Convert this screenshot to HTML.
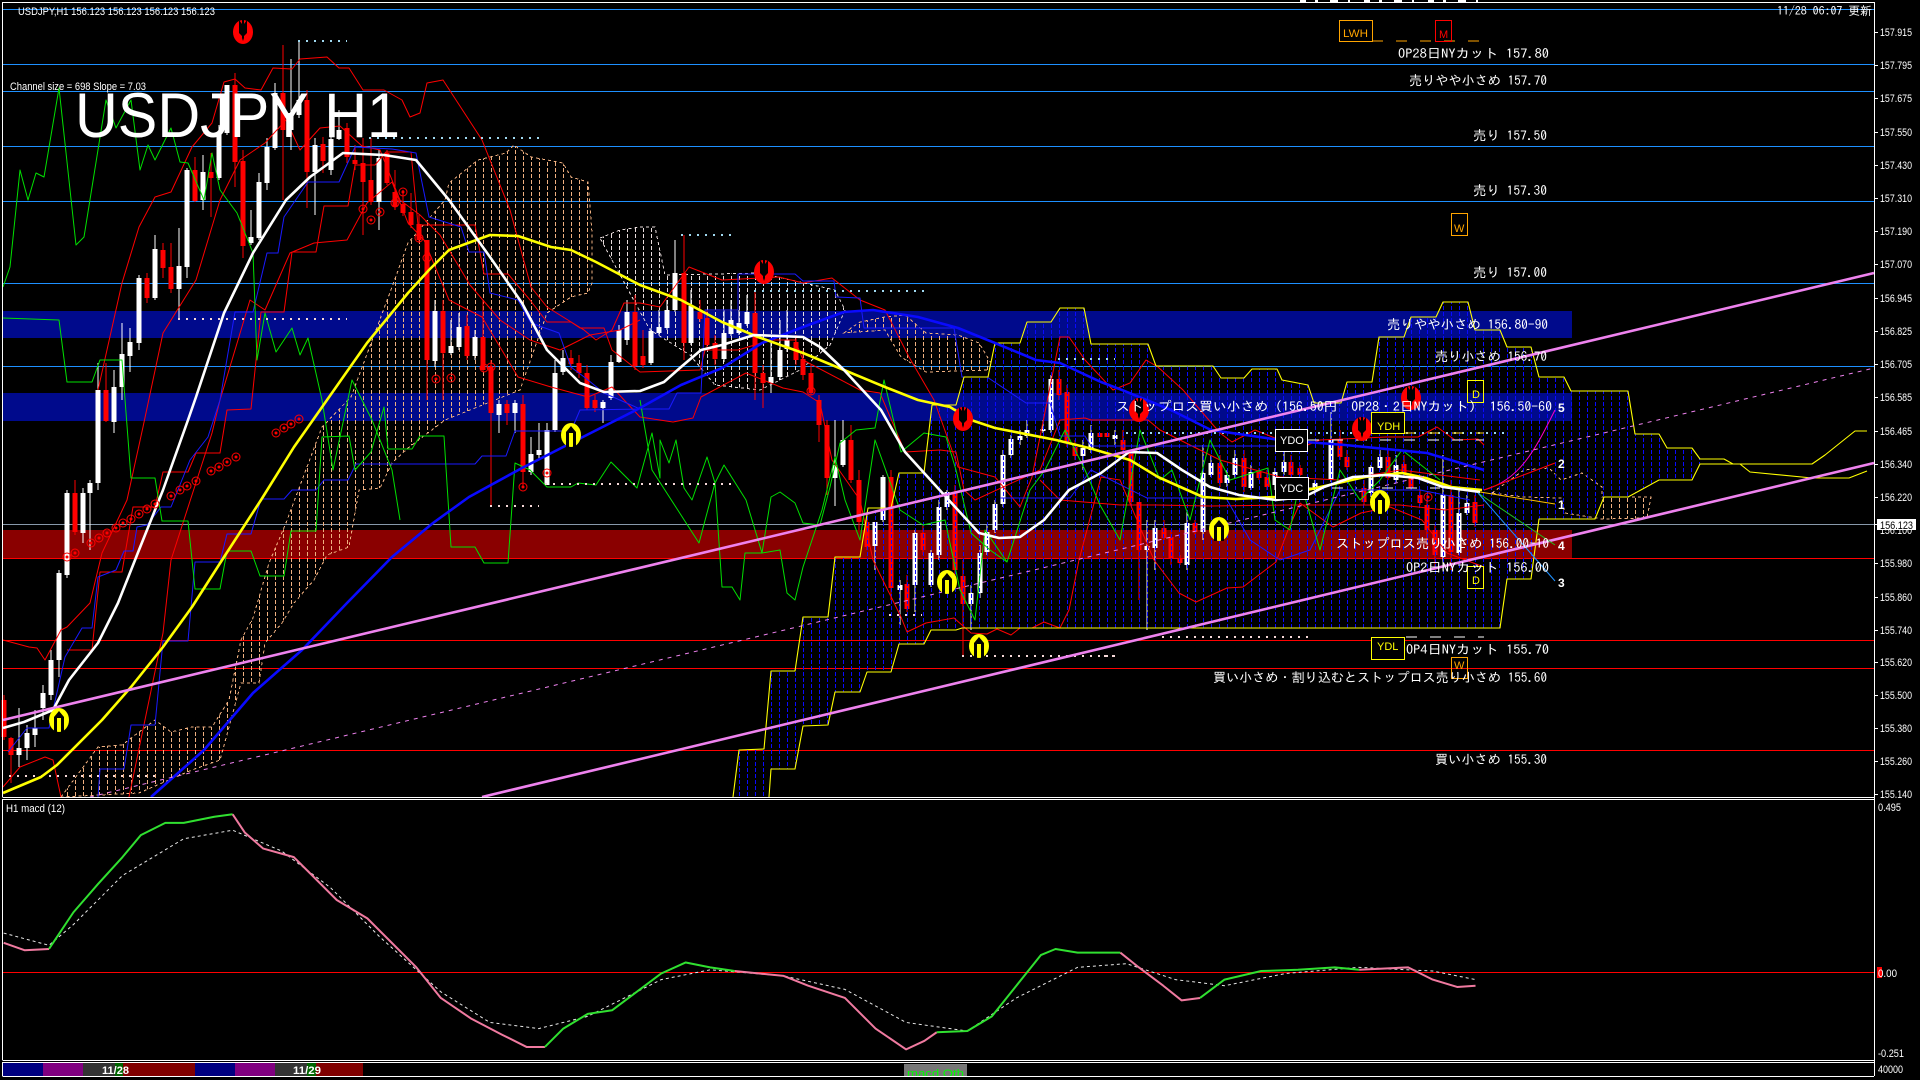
<!DOCTYPE html>
<html lang="ja"><head><meta charset="utf-8"><title>USDJPY H1</title>
<style>
html,body{margin:0;padding:0;background:#000;width:1920px;height:1080px;overflow:hidden}
svg{display:block}
text{fill:#fff;font-family:"Liberation Sans","IPAGothic","Noto Sans CJK JP",sans-serif}
.a{font-size:11px}
.l{font-size:13px;font-family:"IPAGothic","Liberation Sans","Noto Sans CJK JP",sans-serif}
.n{fill:none;stroke-linejoin:round}
.t{fill:none;stroke-width:1}
</style></head><body>
<svg width="1920" height="1080" viewBox="0 0 1920 1080" xmlns="http://www.w3.org/2000/svg" shape-rendering="crispEdges">
<defs>
<pattern id="pb" width="8" height="6" patternUnits="userSpaceOnUse" x="3"><rect x="0" y="0" width="1" height="4" fill="#0a0aff"/></pattern>
<pattern id="po" width="8" height="6" patternUnits="userSpaceOnUse" x="3"><rect x="0" y="0" width="1" height="4" fill="#f0b080"/></pattern>
<pattern id="pw" width="8" height="6" patternUnits="userSpaceOnUse" x="3"><rect x="0" y="0" width="1" height="4" fill="#e8dcdc"/></pattern>
<g id="c"><circle r="4" fill="none" stroke="#f00" stroke-width="1"/><circle r="1.5" fill="#f00"/></g>
<g id="ru"><ellipse rx="10" ry="12" fill="#f00"/><path d="M-1 -12H1V6L0 9L-1 6Z" fill="#000"/><path d="M-4 -12L-1 -8V4L-4 1Z M4 -12L1 -8V4L4 1Z" fill="#000"/></g>
<g id="yu"><ellipse rx="10" ry="12" fill="#ff0"/><path d="M0 -9L5 -3V12H2V-2H-2V12H-5V-3Z" fill="#000"/></g>
</defs>
<rect width="1920" height="1080" fill="#000"/>

<!-- bands -->
<rect x="3" y="311" width="1569" height="27" fill="#000a8c"/>
<rect x="3" y="393" width="1569" height="28" fill="#000a8c"/>
<rect x="3" y="530" width="1569" height="28" fill="#8a0000"/>

<!-- horizontal levels -->
<g stroke="#1e90ff" stroke-width="1">
<path d="M3 9.5H1874M3 64.5H1874M3 91.5H1874M3 146.5H1874M3 201.5H1874M3 283.5H1874M3 366.5H1874"/>
</g>
<path d="M3 524.5H1874" stroke="#8899aa"/>
<path d="M3 558.5H1874M3 640.5H1874M3 668.5H1874M3 750.5H1874" stroke="#f00"/>

<!-- kumo fills under candles (orange+pale) -->
<polygon fill="url(#po)" stroke="#f0b080" stroke-width="1" stroke-dasharray="3 3" points="61,797 98,747 122,745 155,720 171,732 192,727 212,727 229,700 241,640 253,618 269,563 286,523 322,427 351,397 392,287 408,243 445,200 449,183 478,160 506,153 514,145 531,157 563,163 571,177 588,182 592,233 592,283 588,293 571,297 547,313 520,390 470,410 445,420 408,448 392,463 380,488 359,490 349,547 327,555 314,580 294,603 282,623 265,643 259,683 241,683 220,760 192,770 139,793"/>
<polygon fill="url(#po)" stroke="#f0b080" stroke-width="1" stroke-dasharray="3 3" points="844,333 860,322 885,317 905,315 926,333 958,335 979,343 991,363 989,370 926,372 901,357 885,330"/>
<polygon fill="url(#pw)" stroke="#e8dcdc" stroke-width="1" stroke-dasharray="3 3" points="600,238 620,230 640,227 655,227 665,275 760,273 835,290 845,310 830,345 800,370 760,390 715,385 690,355 650,330"/>
<polygon fill="url(#po)" stroke="#f0b080" stroke-width="1" stroke-dasharray="3 3" points="1492,493 1524,470 1549,468 1561,480 1582,473 1602,487 1602,497 1651,497 1647,518 1602,519 1565,513 1561,498 1524,497"/>
<polygon fill="url(#po)" points="1060,505 1085,520 1160,520 1180,460 1300,465 1330,470 1460,470 1440,490 1380,505 1300,520 1200,520 1100,525"/>

<!-- candles -->
<path stroke="#fff" stroke-width="1" fill="none" d="M19 708V767M27 725V760M35 710V747M43 685V720M51 650V700M59 570V677M67 490V578M83 488V543M90 480V550M98 363V490M114 370V433M122 323V400M130 328V372M139 275V350M155 235V300M179 228V320M187 168V278M203 155V210M219 125V180M227 85V135M251 210V245M259 173V240M267 138V190M275 83V150M291 59V150M299 40V118M315 138V215M331 110V175M339 110V140M379 150V230M435 300V367M451 320V355M459 313V350M475 330V360M499 400V433M515 400V433M531 437V475M539 423V460M547 423V485M555 360V432M563 350V375M603 400V423M611 355V400M619 325V363M627 300V345M651 328V365M659 310V335M667 300V330M675 240V312M691 290V345M724 310V362M731 300V336M739 310V335M747 295V326M771 340V393M780 320V380M787 310V352M835 420V506M843 420V467M875 522V570M883 475V522M900 580V625M915 530V612M931 550V587M939 500V560M947 490V510M971 585V630M980 545V598M987 525V555M995 500V533M1003 450V507M1011 435V458M1020 430V445M1027 420V438M1043 420V433M1051 375V433M1083 440V470M1091 425V453M1115 430V445M1147 520V630M1155 520V570M1187 510V570M1203 445V540M1211 455V477M1227 470V487M1235 450V478M1251 465V490M1275 468V490M1284 450V475M1315 480V495M1331 412V482M1371 465V497M1380 450V470M1396 455V482M1443 455V570M1459 490V555M1467 495V515"/>
<path stroke="#fff" stroke-width="5" fill="none" d="M19 748V755M27 733V748M35 728V735M43 693V708M51 660V695M59 573V660M67 493V575M83 493V533M90 483V493M98 390V483M114 387V422M122 354V387M130 342V356M139 278V343M155 249V298M179 266V289M187 170V267M203 172V200M219 133V178M227 85V133M251 237V243M259 182V238M267 147V183M275 93V148M291 113V130M299 100V115M315 145V172M331 139V170M339 130V139M379 158V202M435 311V361M451 346V353M459 327V347M475 337V356M499 404V415M515 403V413M531 454V472M539 450V455M547 430V485M555 373V430M563 358V372M603 402V408M611 362V398M619 330V362M627 312V340M651 331V363M659 327V333M667 310V328M675 273V310M691 306V343M724 333V359M731 320V334M739 323V333M747 312V324M771 377V383M780 350V377M787 340V349M835 465V478M843 440V465M875 522V546M883 477V520M900 585V590M915 533V585M931 553V585M939 507V555M947 492V507M971 593V604M980 553V593M987 532V552M995 504V530M1003 455V504M1011 439V455M1020 436V440M1027 430V436M1043 429V431M1051 379V430M1083 448V456M1091 433V450M1115 435V439M1147 546V550M1155 528V548M1187 523V565M1203 473V532M1211 463V475M1227 475V483M1235 458V475M1251 472V488M1275 472V485M1284 462V472M1315 483V490M1331 440V480M1371 467V493M1380 457V468M1396 465V480M1443 495V557M1459 513V553M1467 503V513"/>
<path stroke="#f00" stroke-width="1" fill="none" d="M4 695V740M11 737V783M75 480V535M106 363V422M147 273V303M163 243V278M171 243V293M195 157V202M211 153V217M235 73V187M243 150V258M283 45V200M307 90V208M323 137V173M347 123V163M355 145V170M363 138V235M371 138V205M387 150V185M395 170V210M403 190V216M411 193V228M419 215V243M427 240V400M443 300V400M467 315V360M483 300V372M491 360V506M507 400V425M523 395V487M571 350V370M579 355V378M587 365V410M595 395V412M635 295V370M643 330V368M684 235V360M700 300V322M707 310V350M715 335V365M755 292V400M763 365V408M796 335V365M803 350V380M811 365V395M819 395V442M827 420V495M851 425V483M859 470V530M867 515V550M891 470V600M907 575V612M923 525V555M955 485V575M963 560V655M1059 370V400M1067 385V447M1075 440V460M1123 430V455M1131 450V505M1139 502V600M1164 520V540M1171 530V565M1180 555V565M1195 520V535M1220 455V487M1244 450V492M1259 468V480M1267 470V490M1291 455V478M1300 465V476M1340 430V460M1347 450V470M1364 480V505M1388 450V480M1404 455V476M1411 470V490M1420 490V505M1427 495V550M1435 525V570M1451 480V570M1475 495V527"/>
<path stroke="#f00" stroke-width="5" fill="none" d="M4 700V737M11 738V755M75 493V532M106 390V421M147 278V298M163 250V268M171 267V289M195 170V201M211 172V178M235 85V162M243 161V246M283 93V130M307 100V172M323 144V161M347 128V157M355 160V164M363 163V182M371 180V202M387 153V183M395 192V207M403 204V213M411 212V225M419 224V240M427 240V360M443 311V353M467 326V356M483 337V370M491 367V413M507 404V413M523 404V472M571 358V364M579 363V373M587 373V408M595 400V408M635 312V366M643 356V365M684 273V343M700 312V319M707 318V345M715 343V359M755 313V373M763 373V383M796 342V360M803 359V375M811 373V393M819 400V425M827 425V478M851 440V480M859 480V522M867 522V547M891 477V588M907 584V609M923 533V550M955 493V570M963 576V604M1059 379V395M1067 392V443M1075 447V456M1100 433V437M1107 433V437M1123 440V450M1131 450V502M1139 502V550M1164 528V538M1171 537V558M1180 558V563M1195 523V532M1220 463V483M1244 458V487M1259 472V478M1267 477V487M1291 462V475M1300 468V475M1340 439V457M1347 457V467M1364 488V502M1388 457V478M1404 464V473M1411 477V488M1420 495V503M1427 505V530M1435 530V555M1451 495V552M1475 502V523"/>

<!-- blue kumo dashes (over candles) -->
<polygon fill="url(#pb)" points="733,797 739,750 764,749 771,671 795,671 803,617 828,617 835,557 860,557 868,508 891,508 899,473 924,473 932,405 956,405 964,377 988,377 995,343 1020,343 1027,322 1051,322 1060,308 1084,308 1091,344 1148,344 1156,366 1213,366 1221,378 1244,378 1252,369 1277,369 1282,380 1308,385 1314,403 1341,403 1347,382 1372,382 1379,337 1404,337 1411,317 1436,317 1443,302 1468,302 1475,330 1500,330 1507,347 1531,347 1539,377 1564,377 1571,391 1628,391 1635,434 1659,434 1667,448 1692,448 1700,459 1700,464 1692,480 1659,480 1628,497 1604,497 1595,519 1539,519 1531,579 1507,579 1500,628 962,628 956,630 931,630 924,644 899,644 891,672 867,672 860,692 835,692 828,725 803,726 795,769 771,769 769,797"/>

<!-- red thin curves -->
<g class="n" stroke="#f00" stroke-width="1" shape-rendering="auto">
<polyline class="n" points="98,390 122,283 139,227 155,197 171,192 192,147 212,123 224,82 235,79 245,88 261,90 273,68 292,69 300,59 327,57 339,68 349,68 363,90 384,90 402,100 410,117 420,113 427,83 443,80 482,140 510,210 531,287 547,307 584,330 596,340 612,330 624,303 640,303 660,307 689,267 722,280 779,277 803,283 832,278 860,300 885,310 909,357 934,400 958,467 995,477 1020,507 1032,477 1060,337 1069,337 1085,360 1113,390 1130,383 1146,360 1158,367 1183,390 1220,433 1232,442 1255,430 1300,448 1320,440 1386,437 1418,437 1437,427 1455,440 1478,439 1484,445"/>
<polyline class="n" points="3,787 20,767 45,757 53,760 61,797"/>
<polyline class="n" points="3,640 29,647 37,648 45,660 61,630 67,627 90,603 102,553 127,500 143,427 163,333 196,280 220,200 240,160 265,143 286,120 300,150 320,128 340,126 362,146 380,150 400,200 420,215 440,235 470,285 500,320 530,340 560,350 590,335 620,330 640,320"/>
<polyline class="n" points="129,797 163,633 171,560 212,433 220,400 250,300 265,310 290,253 314,243 347,240 367,203 392,182 408,223 424,240 449,300 482,317 518,377 551,387 588,397 612,387 640,417 673,422 693,418 701,397 746,373 783,388 803,392 820,403 832,460 860,500 873,560 901,617 907,632 926,623 954,618 971,633 987,634 997,629 1011,635 1020,628 1032,628 1044,622 1060,628 1069,610 1079,560 1101,477 1120,480 1154,560 1179,593 1196,602 1227,588 1243,587 1276,562 1288,530 1300,503 1333,527 1361,513 1390,507 1422,520 1447,553 1484,567"/>
<polyline class="n" points="67,650 92,650 100,572 122,572 133,507 155,507 163,472 188,472 196,453 220,453 227,410 251,409 261,312 284,312 292,252 316,252 324,206 348,206 355,165 375,165 386,152 411,152 418,225 475,225 484,274 508,274 530,300 547,322 571,322 580,328 604,328 612,350 640,372 700,370 705,350 738,350 771,340 795,340 803,360 860,390 880,393 905,452 940,450 956,452 964,490 975,500 1040,470 1060,420 1085,418 1091,420 1148,420 1160,430 1220,460 1280,477 1340,480 1400,470 1480,480"/>
<polyline class="n" points="1040,480 1060,500 1120,505 1156,505 1210,506 1290,505 1400,505 1445,510 1484,505"/>
</g>

<!-- blue thin lines -->
<g shape-rendering="auto">
<polyline class="n" stroke="#1a1aff" stroke-width="1" points="8,752 27,728 49,728 65,657 82,628 92,628 98,577 116,570 124,551 133,551 137,527 147,525 161,507 171,507 190,460 208,437 220,400 235,312 253,312 267,253 278,253 284,217 308,182 339,182 355,147 392,149 416,153 429,217 461,227 469,252 484,252 490,293 518,300 531,323 559,333 571,367 588,380 604,393 640,409 669,409 677,393 701,393 705,310 738,310 738,274 795,274 803,281 834,281 836,297 860,298 864,328 954,328 962,377 987,377 1026,403 1050,403 1060,436 1085,436 1091,446 1280,446 1300,450"/>
<polyline class="n" stroke="#1a1aff" stroke-width="1" points="98,797 100,769 124,769 131,725 155,725 163,641 188,641 195,562 220,562 227,534 251,534 261,499 284,499 292,490 316,490 324,480 348,480 356,464 475,464 482,456 506,456 515,431 571,431 580,410 640,409"/>
<polyline class="n" stroke="#1a1aff" stroke-width="1" points="1000,498 1070,498 1091,470 1147,498 1226,498 1250,540 1280,560 1310,550 1340,490 1420,490 1470,500"/>
</g>

<!-- green -->
<g shape-rendering="auto">
<polyline class="n" stroke="#00e000" stroke-width="1" points="3,287 10,267 20,170 28,200 36,173 44,177 59,88 76,245 84,237 106,100 116,128 131,100 140,170 148,145 155,160 171,128 180,162 188,163 204,200 212,153 220,190 237,213 253,253 257,360 265,313 276,352 292,328 300,355 308,338 322,400 333,470 352,380 372,420 392,470 400,520"/>
<polyline class="n" stroke="#00e000" stroke-width="1" points="3,318 31,319 59,320 67,382 92,382 100,360 122,360 131,478 155,478 162,521 188,521 195,589 220,589 227,551 251,551 260,576 284,576 291,531 316,531 322,437 349,436 355,470 371,452 384,407 388,449 412,449 420,436 444,436 451,547 475,547 484,563 508,563 515,463 530,470 547,487 571,487 578,483 596,485 611,462 637,488 652,433 660,478 660,440 669,463 676,440 684,488 692,500 707,457 715,483 724,465 746,500 762,553 771,497 780,492 795,503 803,523 820,525 830,487 840,443 856,430 875,428 884,380 901,452 924,433 946,437 956,470 971,533 990,550 1007,562"/>
<polyline class="n" stroke="#00e000" stroke-width="1" points="640,400 652,470 699,543 715,483 722,587 732,587 740,600 745,553 762,553 780,550 787,593 795,600 803,567 822,510 835,457 845,500 860,540 875,440 900,510 923,525 945,520 960,590 975,620 985,530 1007,562 1030,490 1045,470 1065,430 1085,470 1100,505 1120,540 1140,430 1160,480 1172,470 1190,520 1210,440 1230,480 1268,468 1275,520 1290,530 1300,480 1320,550 1340,470 1360,500 1380,480 1402,450 1440,480"/>
</g>

<!-- dotted -->
<g fill="none" stroke-width="2" stroke-dasharray="2 6">
<path stroke="#9fd8f0" d="M298 41H347M369 138H539M681 235H731M754 291H925M1058 359H1115M1126 433H1504"/>
<path stroke="#f6d8d8" d="M178 319H347M545 484H732M490 506H539M9 776H155M889 615H922M962 656H1115M1162 637H1308M1104 656H1116"/>
</g>
<g fill="none" stroke-width="1" stroke-dasharray="11 13">
<path stroke="#fff" d="M1308 440H1484M1308 488H1357M1382 488H1440M1406 637H1484"/>
<path stroke="#ffd000" d="M1404 433H1484"/>
<path stroke="#ffa500" d="M1372 41H1484"/>
</g>

<!-- moving averages -->
<g shape-rendering="auto">
<polyline class="n" stroke="#ffff00" stroke-width="1.1" points="733,797 739,750 764,749 771,671 795,671 803,617 828,617 835,557 860,557 868,508 891,508 899,473 924,473 932,405 956,405 964,377 988,377 995,343 1020,343 1027,322 1051,322 1060,308 1084,308 1091,344 1148,344 1156,366 1213,366 1221,378 1244,378 1252,369 1277,369 1282,380 1308,385 1314,403 1341,403 1347,382 1372,382 1379,337 1404,337 1411,317 1436,317 1443,302 1468,302 1475,330 1500,330 1507,347 1531,347 1539,377 1564,377 1571,391 1628,391 1635,434 1659,434 1667,448 1692,448 1700,459 1724,459 1733,464 1812,464 1825,455 1855,431 1867,431"/>
<polyline class="n" stroke="#ffff00" stroke-width="1.1" points="769,797 771,769 795,769 803,726 828,725 835,692 860,692 867,672 891,672 899,644 924,644 931,630 956,630 962,628 1500,628 1507,579 1531,579 1539,519 1595,519 1604,497 1628,497 1659,480 1692,480 1700,464 1740,464 1750,472 1812,478 1849,478 1867,471"/>
<polyline class="n" stroke="#0a0aff" stroke-width="2.6" points="151,797 204,750 253,693 302,650 347,603 392,557 433,523 469,497 522,468 571,443 640,408 681,385 722,368 762,343 803,327 844,312 873,310 918,317 958,328 995,343 1036,360 1060,363 1101,382 1122,390 1171,410 1211,430 1280,440 1345,445 1427,453 1484,470"/>
<polyline class="n" stroke="#ffff00" stroke-width="2.6" points="3,793 41,777 57,765 102,720 131,687 163,647 192,607 224,557 261,500 294,447 327,400 367,343 408,293 429,270 449,250 490,235 518,236 551,247 571,250 596,262 640,285 681,300 722,322 758,337 803,353 844,370 885,387 918,400 950,407 971,420 995,428 1056,440 1089,448 1130,460 1158,477 1203,497 1236,499 1275,497 1316,488 1365,477 1402,473 1426,478 1451,487 1482,490"/>
<polyline class="n" stroke="#fff" stroke-width="2.6" points="3,728 24,722 53,710 69,680 98,643 118,603 139,550 163,490 188,420 196,397 224,313 253,253 286,200 310,177 343,153 384,155 416,160 449,200 490,257 522,303 547,350 580,383 604,392 640,391 664,382 681,367 701,350 722,345 754,335 803,337 820,347 844,370 881,410 905,452 946,497 979,533 999,538 1020,537 1044,520 1069,490 1101,473 1129,452 1157,453 1182,470 1210,487 1239,495 1276,500 1304,497 1324,487 1353,477 1386,475 1418,478 1443,487 1480,492"/>
<!-- channel -->
<polyline class="n" stroke="#ee82ee" stroke-width="2.6" points="3,720 1874,273"/>
<polyline class="n" stroke="#ee82ee" stroke-width="2.6" points="482,797 1874,463"/>
<polyline class="n" stroke="#ee82ee" stroke-width="1" stroke-dasharray="4 5" points="90,797 1874,368"/>
<!-- projection -->
<path class="n" stroke="#ff00c8" stroke-width="1" d="M1484 490C1520 480 1535 450 1555 410"/>
<path class="n" stroke="#f00" stroke-width="1" d="M1484 490L1555 463"/>
<path class="n" stroke="#ffc000" stroke-width="1" d="M1480 492L1555 504"/>
<path class="n" stroke="#20c020" stroke-width="1" d="M1478 493L1555 545"/>
<path class="n" stroke="#1e90ff" stroke-width="1" d="M1478 493L1555 581"/>
</g>

<!-- circle markers -->
<g shape-rendering="auto">
<use href="#c" x="67" y="557"/><use href="#c" x="75" y="553"/><use href="#c" x="91" y="543"/><use href="#c" x="99" y="538"/><use href="#c" x="107" y="533"/><use href="#c" x="116" y="528"/><use href="#c" x="123" y="523"/><use href="#c" x="131" y="519"/><use href="#c" x="139" y="514"/><use href="#c" x="147" y="509"/><use href="#c" x="155" y="504"/><use href="#c" x="171" y="496"/><use href="#c" x="180" y="490"/><use href="#c" x="187" y="486"/><use href="#c" x="196" y="481"/><use href="#c" x="211" y="471"/><use href="#c" x="219" y="467"/><use href="#c" x="227" y="462"/><use href="#c" x="236" y="457"/><use href="#c" x="276" y="433"/><use href="#c" x="284" y="428"/><use href="#c" x="291" y="424"/><use href="#c" x="299" y="419"/><use href="#c" x="523" y="487"/><use href="#c" x="547" y="473"/><use href="#c" x="363" y="209"/><use href="#c" x="371" y="220"/><use href="#c" x="380" y="212"/><use href="#c" x="395" y="203"/><use href="#c" x="403" y="192"/><use href="#c" x="419" y="238"/><use href="#c" x="427" y="258"/><use href="#c" x="436" y="379"/><use href="#c" x="451" y="378"/><use href="#c" x="484" y="368"/><use href="#c" x="491" y="367"/><use href="#c" x="811" y="391"/><use href="#c" x="1428" y="497"/>
<use href="#ru" x="243" y="32"/><use href="#ru" x="764" y="272"/><use href="#ru" x="963" y="419"/><use href="#ru" x="1139" y="410"/><use href="#ru" x="1362" y="429"/><use href="#ru" x="1411" y="398"/>
<use href="#yu" x="59" y="720"/><use href="#yu" x="571" y="435"/><use href="#yu" x="947" y="582"/><use href="#yu" x="979" y="646"/><use href="#yu" x="1219" y="529"/><use href="#yu" x="1380" y="502"/>
</g>

<!-- boxes -->
<g fill="none" stroke-width="1">
<rect x="1339.5" y="20.5" width="33" height="21" stroke="#ffa500"/>
<rect x="1435.5" y="20.5" width="16" height="21" stroke="#f00"/>
<rect x="1451.5" y="213.5" width="16" height="22" stroke="#ffa500"/>
<rect x="1467.5" y="380.5" width="16" height="22" stroke="#ff0"/>
<rect x="1467.5" y="566.5" width="16" height="22" stroke="#ff0"/>
<rect x="1371.5" y="412.5" width="33" height="21" fill="#000" stroke="#ff0"/>
<rect x="1371.5" y="637.5" width="33" height="22" fill="#000" stroke="#ff0"/>
<rect x="1451.5" y="657.5" width="16" height="21" stroke="#ffa500"/>
<rect x="1275.5" y="429.5" width="32" height="22" fill="#000" stroke="#fff"/>
<rect x="1275.5" y="477.5" width="33" height="22" fill="#000" stroke="#fff"/>
</g>
<text class="a" x="1343" y="37" textLength="25" lengthAdjust="spacingAndGlyphs" style="fill:#ffa500">LWH</text>
<text class="a" x="1439" y="38" style="fill:#f00">M</text>
<text class="a" x="1454" y="232" style="fill:#ffa500">W</text>
<text class="a" x="1472" y="398" style="fill:#ff0">D</text>
<text class="a" x="1472" y="584" style="fill:#ff0">D</text>
<text class="a" x="1377" y="430" style="fill:#ff0">YDH</text>
<text class="a" x="1377" y="650" style="fill:#ff0">YDL</text>
<text class="a" x="1454" y="669" style="fill:#ffa500">W</text>
<text class="a" x="1280" y="444">YDO</text>
<text class="a" x="1280" y="492">YDC</text>

<!-- level labels -->
<g class="l">
<text class="l" x="1398" y="58" textLength="151" lengthAdjust="spacingAndGlyphs">OP28日NYカット 157.80</text>
<text class="l" x="1409" y="85" textLength="138" lengthAdjust="spacingAndGlyphs">売りやや小さめ 157.70</text>
<text class="l" x="1473" y="140" textLength="74" lengthAdjust="spacingAndGlyphs">売り 157.50</text>
<text class="l" x="1473" y="195" textLength="74" lengthAdjust="spacingAndGlyphs">売り 157.30</text>
<text class="l" x="1473" y="277" textLength="74" lengthAdjust="spacingAndGlyphs">売り 157.00</text>
<text class="l" x="1387" y="329" textLength="161" lengthAdjust="spacingAndGlyphs">売りやや小さめ 156.80-90</text>
<text class="l" x="1435" y="361" textLength="112" lengthAdjust="spacingAndGlyphs">売り小さめ 156.70</text>
<text class="l" x="1116" y="411" textLength="436" lengthAdjust="spacingAndGlyphs">ストップロス買い小さめ（156.50円　OP28・2日NYカット） 156.50-60</text>
<text class="l" x="1336" y="548" textLength="213" lengthAdjust="spacingAndGlyphs">ストップロス売り小さめ 156.00-10</text>
<text class="l" x="1406" y="572" textLength="143" lengthAdjust="spacingAndGlyphs">OP2日NYカット 156.00</text>
<text class="l" x="1406" y="654" textLength="143" lengthAdjust="spacingAndGlyphs">OP4日NYカット 155.70</text>
<text class="l" x="1213" y="682" textLength="334" lengthAdjust="spacingAndGlyphs">買い小さめ・割り込むとストップロス売り小さめ 155.60</text>
<text class="l" x="1435" y="764" textLength="112" lengthAdjust="spacingAndGlyphs">買い小さめ 155.30</text>
</g>
<g style="font-weight:bold">
<text x="1558" y="412" font-size="12" font-weight="bold">5</text>
<text x="1558" y="468" font-size="12" font-weight="bold">2</text>
<text x="1558" y="509" font-size="12" font-weight="bold">1</text>
<text x="1558" y="550" font-size="12" font-weight="bold">4</text>
<text x="1558" y="587" font-size="12" font-weight="bold">3</text>
</g>

<!-- title texts -->
<text class="a" x="18" y="15" textLength="197" lengthAdjust="spacingAndGlyphs">USDJPY,H1  156.123 156.123 156.123 156.123</text>
<text class="a" x="10" y="90" textLength="136" lengthAdjust="spacingAndGlyphs">Channel size = 698 Slope = 7.03</text>
<text x="75" y="137" font-size="63" textLength="325" lengthAdjust="spacingAndGlyphs">USDJPY H1</text>
<text class="l" x="1777" y="15" textLength="95" lengthAdjust="spacingAndGlyphs" style="font-size:12px">11/28 06:07 更新</text>
<path d="M1300 1H1492" stroke="#fff" stroke-width="2" stroke-dasharray="6 9 3 12 8 10 2 14" fill="none"/>

<!-- MACD -->
<text class="a" x="6" y="812" textLength="59" lengthAdjust="spacingAndGlyphs">H1  macd (12)</text>
<path d="M3 972.5H1874" stroke="#f00"/>
<g transform="scale(1.2245)" shape-rendering="auto">
<polyline class="n" stroke="#e8e8e8" stroke-width="1" stroke-dasharray="3 3" vector-effect="non-scaling-stroke" points="3,762 40,772 60,755 100,715 150,685 190,678 230,695 270,725 310,765 360,810 400,835 440,840 480,830 540,800 580,792 640,797 690,808 740,835 790,842 830,815 880,790 920,787 960,800 1000,805 1050,795 1110,790 1170,793 1205,800"/>
<g stroke-width="2">
<polyline class="n" stroke="#f07aa0" vector-effect="non-scaling-stroke" points="3,770 20,776 40,775"/>
<polyline class="n" stroke="#30e030" vector-effect="non-scaling-stroke" points="40,775 60,745 80,722 100,700 115,682 135,672 150,672 175,667 190,665"/>
<polyline class="n" stroke="#f07aa0" vector-effect="non-scaling-stroke" points="190,665 200,680 215,693 240,700 255,715 275,735 300,750 320,770 340,790 360,815 385,832 410,845 430,855 445,855"/>
<polyline class="n" stroke="#30e030" vector-effect="non-scaling-stroke" points="445,855 460,840 480,828 500,825 520,810 540,795 560,786 580,790 600,793"/>
<polyline class="n" stroke="#f07aa0" vector-effect="non-scaling-stroke" points="600,793 640,797 660,805 690,815 715,840 740,857 755,850 765,843"/>
<polyline class="n" stroke="#30e030" vector-effect="non-scaling-stroke" points="765,843 790,842 810,830 830,805 850,780 862,775 880,778 915,778"/>
<polyline class="n" stroke="#f07aa0" vector-effect="non-scaling-stroke" points="915,778 930,790 950,805 965,817 980,815"/>
<polyline class="n" stroke="#30e030" vector-effect="non-scaling-stroke" points="980,815 1000,800 1030,793 1060,792 1090,790 1110,792"/>
<polyline class="n" stroke="#f07aa0" vector-effect="non-scaling-stroke" points="1110,792 1150,790 1170,800 1190,806 1205,805"/>
</g>
</g>

<!-- time strip -->
<rect x="3" y="1063" width="40" height="13" fill="#000080"/>
<rect x="43" y="1063" width="40" height="13" fill="#800080"/>
<rect x="83" y="1063" width="32" height="13" fill="#333"/>
<rect x="115" y="1063" width="8" height="13" fill="#006400"/>
<rect x="123" y="1063" width="72" height="13" fill="#800000"/>
<rect x="195" y="1063" width="40" height="13" fill="#000080"/>
<rect x="235" y="1063" width="40" height="13" fill="#800080"/>
<rect x="275" y="1063" width="32" height="13" fill="#333"/>
<rect x="307" y="1063" width="9" height="13" fill="#006400"/>
<rect x="316" y="1063" width="47" height="13" fill="#800000"/>
<text x="102" y="1074" font-size="11" font-weight="bold" textLength="27" lengthAdjust="spacingAndGlyphs">11/28</text>
<text x="293" y="1074" font-size="11" font-weight="bold" textLength="28" lengthAdjust="spacingAndGlyphs">11/29</text>
<rect x="904" y="1064" width="63" height="12" fill="#777"/>
<svg x="904" y="1064" width="63" height="12"><text x="3" y="13" font-size="11" textLength="57" lengthAdjust="spacingAndGlyphs" style="fill:#0f0">macd Oth</text></svg>

<!-- frames -->
<g fill="none" stroke="#fff" stroke-width="1">
<path d="M2.5 797V2.5H1874.5V1076"/>
<path d="M2.5 797.5H1874"/>
<path d="M2.5 1060V799.5H1874"/>
<path d="M2.5 1060.5H1874"/>
<path d="M2.5 1076V1062.5H1874"/>
<path d="M2.5 1076.5H1874"/>
<path d="M1875 32.5h3M1875 65.5h3M1875 98.5h3M1875 132.5h3M1875 165.5h3M1875 198.5h3M1875 231.5h3M1875 264.5h3M1875 298.5h3M1875 331.5h3M1875 364.5h3M1875 397.5h3M1875 431.5h3M1875 464.5h3M1875 497.5h3M1875 563.5h3M1875 597.5h3M1875 630.5h3M1875 662.5h3M1875 695.5h3M1875 728.5h3M1875 761.5h3M1875 794.5h3"/>
</g>

<!-- axis labels -->
<g>
<text class="a" x="1880" y="36" textLength="32" lengthAdjust="spacingAndGlyphs">157.915</text>
<text class="a" x="1880" y="69" textLength="32" lengthAdjust="spacingAndGlyphs">157.795</text>
<text class="a" x="1880" y="102" textLength="32" lengthAdjust="spacingAndGlyphs">157.675</text>
<text class="a" x="1880" y="136" textLength="32" lengthAdjust="spacingAndGlyphs">157.550</text>
<text class="a" x="1880" y="169" textLength="32" lengthAdjust="spacingAndGlyphs">157.430</text>
<text class="a" x="1880" y="202" textLength="32" lengthAdjust="spacingAndGlyphs">157.310</text>
<text class="a" x="1880" y="235" textLength="32" lengthAdjust="spacingAndGlyphs">157.190</text>
<text class="a" x="1880" y="268" textLength="32" lengthAdjust="spacingAndGlyphs">157.070</text>
<text class="a" x="1880" y="302" textLength="32" lengthAdjust="spacingAndGlyphs">156.945</text>
<text class="a" x="1880" y="335" textLength="32" lengthAdjust="spacingAndGlyphs">156.825</text>
<text class="a" x="1880" y="368" textLength="32" lengthAdjust="spacingAndGlyphs">156.705</text>
<text class="a" x="1880" y="401" textLength="32" lengthAdjust="spacingAndGlyphs">156.585</text>
<text class="a" x="1880" y="435" textLength="32" lengthAdjust="spacingAndGlyphs">156.465</text>
<text class="a" x="1880" y="468" textLength="32" lengthAdjust="spacingAndGlyphs">156.340</text>
<text class="a" x="1880" y="501" textLength="32" lengthAdjust="spacingAndGlyphs">156.220</text>
<text class="a" x="1880" y="534" textLength="32" lengthAdjust="spacingAndGlyphs">156.100</text>
<rect x="1877" y="519" width="39" height="11" fill="#fff"/>
<path d="M1875 524.5H1877" stroke="#fff"/>
<text class="a" x="1880" y="529" textLength="33" lengthAdjust="spacingAndGlyphs" style="fill:#000">156.123</text>
<text class="a" x="1880" y="567" textLength="32" lengthAdjust="spacingAndGlyphs">155.980</text>
<text class="a" x="1880" y="601" textLength="32" lengthAdjust="spacingAndGlyphs">155.860</text>
<text class="a" x="1880" y="634" textLength="32" lengthAdjust="spacingAndGlyphs">155.740</text>
<text class="a" x="1880" y="666" textLength="32" lengthAdjust="spacingAndGlyphs">155.620</text>
<text class="a" x="1880" y="699" textLength="32" lengthAdjust="spacingAndGlyphs">155.500</text>
<text class="a" x="1880" y="732" textLength="32" lengthAdjust="spacingAndGlyphs">155.380</text>
<text class="a" x="1880" y="765" textLength="32" lengthAdjust="spacingAndGlyphs">155.260</text>
<text class="a" x="1880" y="798" textLength="32" lengthAdjust="spacingAndGlyphs">155.140</text>
<text class="a" x="1878" y="811" textLength="23" lengthAdjust="spacingAndGlyphs">0.495</text>
<rect x="1877" y="967" width="5" height="11" fill="#f00"/>
<text class="a" x="1878" y="977" textLength="19" lengthAdjust="spacingAndGlyphs">0.00</text>
<text class="a" x="1878" y="1057" textLength="26" lengthAdjust="spacingAndGlyphs">-0.251</text>
<text class="a" x="1878" y="1073" textLength="25" lengthAdjust="spacingAndGlyphs">40000</text>
</g>
</svg>
</body></html>
